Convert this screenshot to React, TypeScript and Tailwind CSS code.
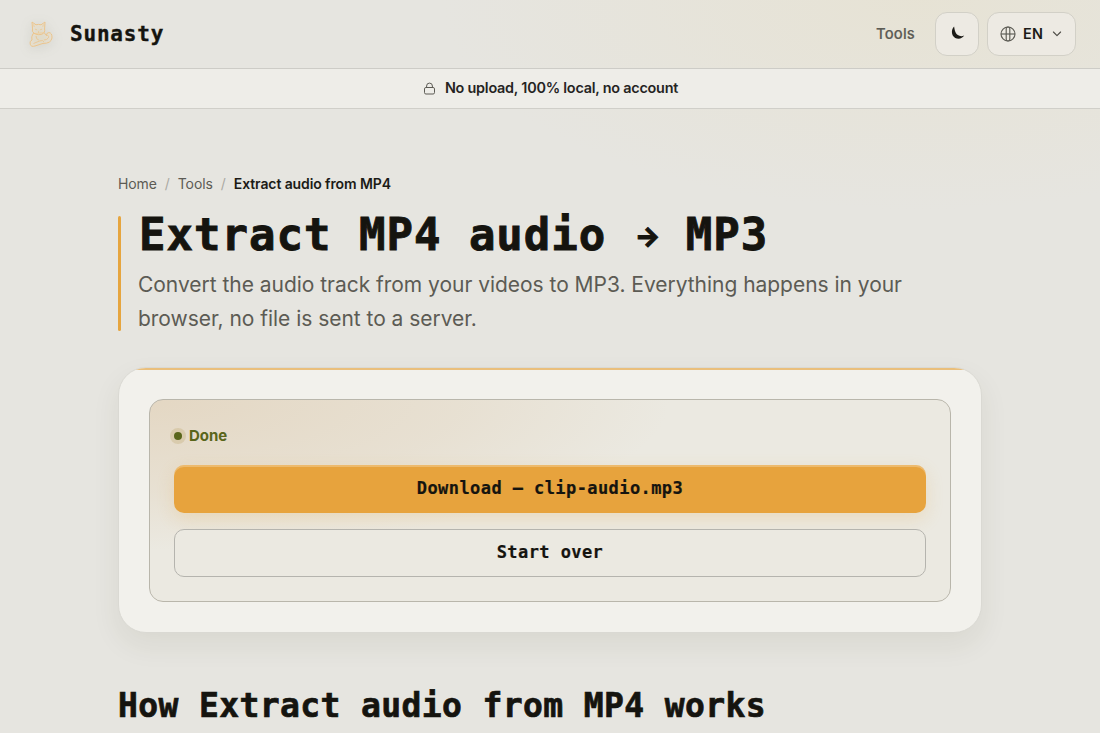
import React from "react";

const mono = "font-['DejaVu_Sans_Mono',monospace] font-bold text-[#15140f]";

function CatLogo() {
  return (
    <svg
      viewBox="2 0 28 32"
      className="h-8 w-7 drop-shadow-[0_2px_6px_rgba(90,100,70,0.22)]"
      fill="rgba(238,222,192,0.4)"
      stroke="#ebc48c"
      strokeWidth="1"
      strokeLinecap="round"
      strokeLinejoin="round"
    >
      <path d="M6.8 16 Q5 19 6 22 Q3.2 23 4.2 26.2 Q5 29.2 9 28 L17 25.4 Q25 25.6 26 20 Q26.2 14.6 22.8 14.6 Q20.4 14.8 20.4 17.4 L18.4 15 Z" />
      <path d="M6.5 10.5 L6 4 L10 6.8 Q12.5 6 15 6.8 L19 4 L18.6 11 Q19.4 15 15.4 16.4 Q9 17.6 6.6 13.6 Z" />
      <path d="M7.7 6.7 L8.1 8.5 M17.3 6.7 L16.9 8.5 M9.3 11.2 L10.8 11.8 M14.3 11.8 L15.8 11.2 M12.6 13.3 v1.2" strokeWidth=".7" />
      <path d="M7.8 25.4 L14 22.8 Q17 21.8 17.8 23.6 M10 18.4 Q10 21.4 12.5 22 M20.4 17.4 Q23.6 17 22.4 19.8 Q21 22 18.2 22" strokeWidth=".8" fill="none" />
    </svg>
  );
}

function Header() {
  return (
    <header className="flex h-[69px] items-center justify-between border-b border-[#cdccc7] pl-[28px] pr-6">
      <a className="flex items-center gap-[14px]">
        <CatLogo />
        <span className={`${mono} text-[21px] leading-8 tracking-[0.8px] [-webkit-text-stroke:0.35px_#15140f]`}>Sunasty</span>
      </a>
      <div className="flex items-center">
        <a className="mr-5 text-[14.8px] font-medium tracking-[0.2px] text-[#5c5b54] [-webkit-text-stroke:0.15px_#5c5b54]">Tools</a>
        <button className="mr-2 flex h-11 w-11 items-center justify-center rounded-[12px] border border-[#d2d0c7] bg-[#edeae3]">
          <svg viewBox="0 0 14 14" className="mb-[2px] ml-[2px] h-[14px] w-[14px]" fill="#1c1b17">
            <path d="M3.1 .6 C-.3 4.2 .4 10 4.2 12 C7.6 13.7 11.5 12.6 13.2 9.6 C9.4 11 6 9.6 4.5 6.3 C3.6 4.3 3.4 2.4 3.1 .6 Z" />
          </svg>
        </button>
        <button className="flex h-11 w-[89px] items-center rounded-[12px] border border-[#d2d0c7] bg-[#edeae3] pl-3">
          <svg viewBox="0 0 16 16" className="h-4 w-4" fill="none" stroke="#5c5b54" strokeWidth="1.15">
            <circle cx="8" cy="8" r="7" />
            <rect x="6.2" y="1" width="3.6" height="14" rx="1.8" />
            <path d="M1 8h14" />
          </svg>
          <span className="ml-[7px] text-[14.4px] font-semibold tracking-[0.3px] text-[#1c1b17]">EN</span>
          <svg viewBox="0 0 10 6" className="ml-[9px] h-[6px] w-[10px]" fill="none" stroke="#4b4a44" strokeWidth="1.1" strokeLinecap="round" strokeLinejoin="round">
            <path d="M1.4 1 L5 4.6 L8.6 1" />
          </svg>
        </button>
      </div>
    </header>
  );
}

function Banner() {
  return (
    <div className="flex h-10 items-center justify-center gap-[9px] border-b border-[#d0cfc9] bg-[#eeede8] pl-px">
      <svg viewBox="0 0 13 13" className="h-[13px] w-[13px]" fill="none" stroke="#5c5b54" strokeWidth="1">
        <rect x="1.5" y="5.5" width="10" height="6.5" rx="1.4" />
        <path d="M3.6 5.5V4a2.9 2.9 0 0 1 5.8 0v1.5" />
      </svg>
      <span className="mb-px text-[14.4px] font-semibold leading-5 tracking-[-0.23px] text-[#25241f]">No upload, 100% local, no account</span>
    </div>
  );
}

export default function App() {
  return (
    <div className="h-[733px] overflow-hidden bg-[#e6e5e0] bg-[radial-gradient(ellipse_480px_210px_at_920px_0px,rgba(231,225,205,0.6),transparent)] font-['Inter',sans-serif]">
      <Header />
      <Banner />
      <main className="mx-auto w-[864px] pt-16">
        <nav className="flex gap-2 text-[14px] leading-[22px] tracking-[-0.1px] text-[#5c5b54]">
          <span>Home</span>
          <span className="text-[#aaa9a3]">/</span>
          <span>Tools</span>
          <span className="text-[#aaa9a3]">/</span>
          <span className="font-semibold text-[#1c1b17]">Extract audio from MP4</span>
        </nav>
        <div className="mt-[21px] flex h-[115px]">
          <div className="w-[3px] shrink-0 rounded-full bg-[#e6a53f]" />
          <div className="pl-[17px]">
            <h1 className={`${mono} -mt-[6px] whitespace-nowrap pl-px text-[44px] leading-[50px] tracking-[1px] [-webkit-text-stroke:0.9px_#15140f]`}>
              Extract MP4 audio{" "}
              <span className="-mr-[3px] inline-block h-[50px] w-[27.44px] text-center align-top font-['Inter',sans-serif] text-[27px] font-extrabold leading-[53px] tracking-normal">→</span>
              {" "}MP3
            </h1>
            <p className="mt-2 w-[800px] text-[21px] leading-[34px] tracking-[-0.03px] text-[#5c5b54]">
              Convert the audio track from your videos to MP3. Everything happens in your browser, no file is sent to a server.
            </p>
          </div>
        </div>
        <section className="mt-9 h-[266px] overflow-hidden rounded-[28px] border border-[#dad9d3] bg-[#f2f1ec] shadow-[0_12px_28px_rgba(60,60,30,0.08)]">
          <div className="h-[2px] bg-[#eabf7c]" />
          <div className="mx-[30px] mt-[29px] h-[203px] rounded-[14px] border border-[#b9b6ab] bg-[#ebe9e1] bg-[radial-gradient(ellipse_520px_150px_at_0px_0px,rgba(226,211,188,0.8),rgba(226,211,188,0.4)_60%,transparent)] px-6 pt-[24px]">
            <div className="flex h-6 items-center gap-[7px]">
              <span className="h-2 w-2 rounded-full bg-[#59651a] shadow-[0_0_0_4px_rgba(190,165,105,0.3)]" />
              <span className="text-[15px] font-bold leading-6 text-[#59651a]">Done</span>
            </div>
            <button className={`${mono} mt-[17px] flex h-12 w-full items-center justify-center rounded-[10px] bg-[#e7a33d] pb-px text-[17px] tracking-[0.42px] shadow-[inset_0_2px_0_rgba(255,255,255,0.25),0_6px_18px_rgba(231,163,61,0.2)] [-webkit-text-stroke:0.2px_#15140f]`}>
              Download — clip-audio.mp3
            </button>
            <button className={`${mono} mt-4 flex h-12 w-full items-center justify-center rounded-[10px] border border-[#b5b4ae] bg-[#ebe9e1] pb-px text-[17px] tracking-[0.42px] [-webkit-text-stroke:0.2px_#15140f]`}>
              Start over
            </button>
          </div>
        </section>
        <h2 className={`${mono} mt-[51px] whitespace-nowrap text-[33px] leading-[44px] tracking-[0.38px] [-webkit-text-stroke:0.7px_#15140f]`}>
          How Extract audio from MP4 works
        </h2>
      </main>
    </div>
  );
}
